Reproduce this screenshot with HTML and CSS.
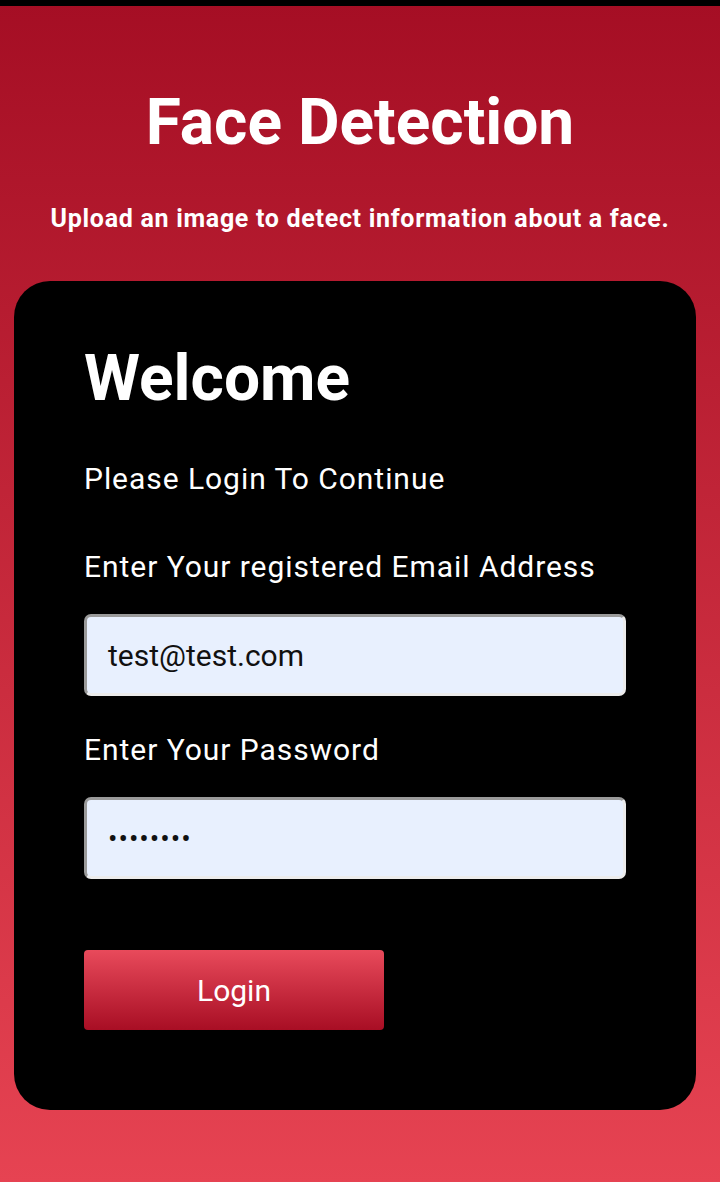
FILE: index.html
```html
<!DOCTYPE html>
<html>
<head>
<meta charset="utf-8">
<link rel="stylesheet" href="styles.css">
</head>
<body>
<div class="topbar"></div>
<main class="page">
  <h1 class="title">Face Detection</h1>
  <p class="subtitle">Upload an image to detect information about a face.</p>
  <section class="card">
    <h2 class="welcome">Welcome</h2>
    <p class="text intro">Please Login To Continue</p>
    <label class="text label email-label">Enter Your registered Email Address</label>
    <div class="input">test@test.com</div>
    <label class="text label pw-label">Enter Your Password</label>
    <div class="input pw">••••••••</div>
    <button class="btn">Login</button>
  </section>
</main>
</body>
</html>
```
FILE: styles.css
```css
html, body {
  margin: 0;
  padding: 0;
}
body {
  width: 720px;
  height: 1182px;
  overflow: hidden;
  font-family: Roboto, "Liberation Sans", sans-serif;
  background: linear-gradient(to bottom, #a50e24 0%, #e64352 100%);
  color: #fff;
}
.topbar {
  height: 6px;
  background: #000;
}
.page {
  display: flex;
  flex-direction: column;
  align-items: center;
}
.title {
  margin: 81px 0 0;
  font-size: 64px;
  font-weight: 700;
  line-height: 72px;
}
.subtitle {
  margin: 45px 0 0;
  font-size: 25px;
  font-weight: 700;
  line-height: 30px;
  letter-spacing: 0.7px;
}
.card {
  align-self: stretch;
  margin: 47px 24px 0 14px;
  background: #000;
  border-radius: 36px;
  padding: 58px 70px 80px;
  display: flex;
  flex-direction: column;
  align-items: flex-start;
}
.welcome {
  margin: 0;
  font-size: 64px;
  font-weight: 700;
  line-height: 80px;
}
.text {
  display: block;
  font-size: 30px;
  line-height: 36px;
  letter-spacing: 0.95px;
}
.intro {
  margin: 42px 0 0;
}
.email-label {
  margin-top: 52px;
}
.pw-label {
  margin-top: 36px;
}
.input {
  box-sizing: border-box;
  align-self: stretch;
  height: 82px;
  margin-top: 29px;
  background: #e8f0fe;
  border: 3px solid;
  border-color: #9a9a9a #ececec #ececec #9a9a9a;
  border-radius: 7px;
  color: #111;
  font-size: 30px;
  padding: 0 21px;
  display: flex;
  align-items: center;
}
.pw {
  font-size: 28px;
  letter-spacing: 1px;
}
.btn {
  margin-top: 71px;
  width: 300px;
  height: 80px;
  border: none;
  border-radius: 4px;
  background: linear-gradient(to bottom, #e84a5b 0%, #a80e24 100%);
  color: #fff;
  font-family: Roboto, "Liberation Sans", sans-serif;
  font-size: 30px;
  padding: 0;
}
```
